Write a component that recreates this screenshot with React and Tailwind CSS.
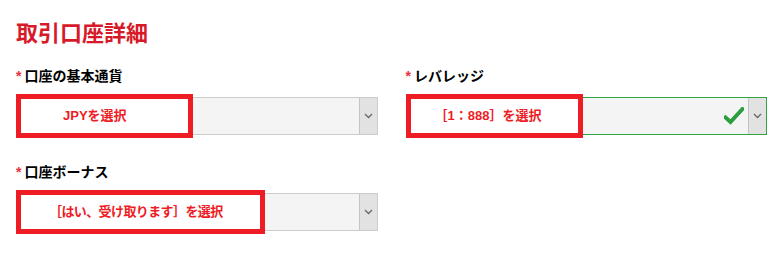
const font = { fontFamily: '"Liberation Sans", "Noto Sans CJK JP", sans-serif' };

const Arrow = () => (
  <div className="flex w-[18px] shrink-0 items-center justify-center border-l border-[#c4c4c4] bg-[#e2e2e2]">
    <svg width="9" height="6" viewBox="0 0 9 6" fill="none">
      <path d="M1 1l3.5 3.5L8 1" stroke="#666" strokeWidth="1.3" />
    </svg>
  </div>
);

const Field = ({ label, note, noteWidth, notePad, tight, valid }) => (
  <div>
    <div className="flex h-5 items-center text-[14px] font-bold text-black">
      <span className="mr-[3px] text-[#e8303a]">*</span>
      {label}
    </div>
    <div className="relative mt-[11px]">
      <div
        className={`flex h-[38px] border bg-[#f4f4f4] ${
          valid ? "border-[#2ea53f]" : "border-[#cccccc]"
        }`}
      >
        <div className="flex flex-1 items-center justify-end pr-[4px]">
          {valid && (
            <svg width="20" height="18" viewBox="0 0 20 18">
              <path
                d="M1.5 10.5l5 4.5L18.5 2"
                fill="none"
                stroke="#2b9e3f"
                strokeWidth="4"
                strokeLinecap="square"
              />
            </svg>
          )}
        </div>
        <Arrow />
      </div>
      <div
        className={`absolute left-0 top-[-3px] flex h-[44px] items-center border-[5px] border-[#ee1c25] bg-white text-[13px] font-bold text-[#ee1c25] ${
          tight ? "tracking-[-0.6px]" : ""
        }`}
        style={{ width: noteWidth, paddingLeft: notePad }}
      >
        {note}
      </div>
    </div>
  </div>
);

export default function App() {
  return (
    <div className="h-[261px] w-[778px] bg-white pl-4 pr-[11px] pt-5" style={font}>
      <h2 className="text-[22px] font-bold leading-[28px] text-[#d71a2a]">取引口座詳細</h2>
      <div className="mt-[18px] grid grid-cols-2 gap-x-[28px] gap-y-[27px]">
        <Field label="口座の基本通貨" note="JPYを選択" noteWidth={177} notePad={42} />
        <Field label="レバレッジ" note="［1：888］を選択" noteWidth={177} notePad={24} valid />
        <Field label="口座ボーナス" note="［はい、受け取ります］を選択" noteWidth={249} notePad={28} tight />
      </div>
    </div>
  );
}
